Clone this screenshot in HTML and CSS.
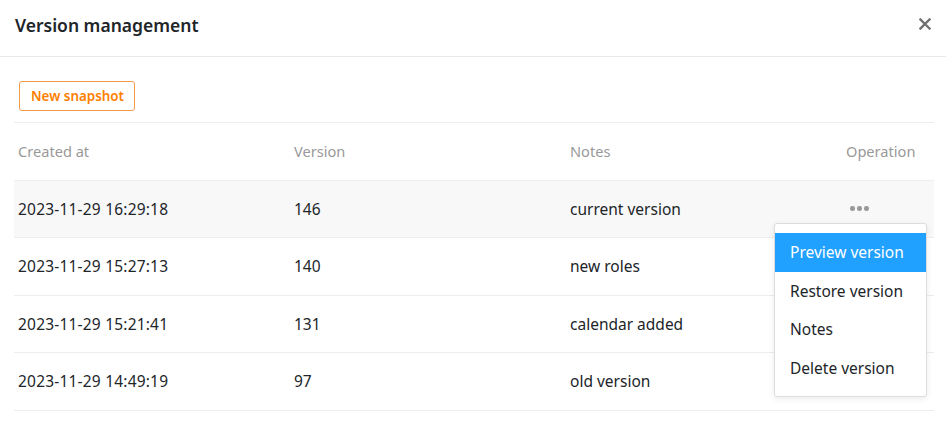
FILE: index.html
```html
<!DOCTYPE html>
<html>
<head>
<meta charset="utf-8">
<link rel="stylesheet" href="styles.css">
</head>
<body>
<div class="dialog">
  <div class="header">
    <div class="title">Version management</div>
    <svg class="close" width="12" height="12" viewBox="0 0 12 12"><path d="M1.5 1.5 L10.5 10.5 M10.5 1.5 L1.5 10.5" stroke="#707070" stroke-width="2.4" stroke-linecap="square"/></svg>
  </div>
  <div class="body">
    <div class="toolbar"><button class="btn">New snapshot</button></div>
    <div class="table">
      <div class="row head">
        <div class="cell">Created at</div>
        <div class="cell">Version</div>
        <div class="cell">Notes</div>
        <div class="cell">Operation</div>
      </div>
      <div class="row hover">
        <div class="cell date">2023-11-29 16:29:18</div>
        <div class="cell">146</div>
        <div class="cell">current version</div>
        <div class="cell"><span class="dots"><i></i><i></i><i></i></span></div>
      </div>
      <div class="row">
        <div class="cell date">2023-11-29 15:27:13</div>
        <div class="cell">140</div>
        <div class="cell">new roles</div>
        <div class="cell"></div>
      </div>
      <div class="row">
        <div class="cell date">2023-11-29 15:21:41</div>
        <div class="cell">131</div>
        <div class="cell">calendar added</div>
        <div class="cell"></div>
      </div>
      <div class="row">
        <div class="cell date">2023-11-29 14:49:19</div>
        <div class="cell">97</div>
        <div class="cell">old version</div>
        <div class="cell"></div>
      </div>
      <div class="menu">
        <div class="item active">Preview version</div>
        <div class="item">Restore version</div>
        <div class="item">Notes</div>
        <div class="item">Delete version</div>
      </div>
    </div>
  </div>
</div>
</body>
</html>
```
FILE: styles.css
```css
* { box-sizing: border-box; }
html, body { margin: 0; padding: 0; background: #fff; }
body { font-family: "Noto Sans", "Open Sans", sans-serif; color: #212529; width: 946px; height: 426px; overflow: hidden; }
.dialog { width: 946px; }
.header { height: 57px; border-bottom: 1px solid #e9e9e9; display: flex; align-items: center; justify-content: space-between; padding: 0 15px 0 15px; }
.title { font-size: 17.5px; font-weight: 600; color: #212529; margin-top: -6px; }
.close { margin-top: -8px; margin-right: 0; }
.body { padding: 24px 12px 0 14px; }
.toolbar { padding: 0 0 11px 5px; border-bottom: 1px solid #eee; }
.btn { font-family: inherit; font-size: 13.4px; font-weight: 600; color: #ff8000; background: #fff; border: 1px solid #f09a4a; border-radius: 3px; height: 30px; padding: 0 10px 0 11px; cursor: pointer; }
.table { position: relative; }
.row { display: grid; grid-template-columns: 276px 276px 276px 1fr; height: 57.5px; align-items: center; border-bottom: 1px solid #eee; font-size: 15.5px; color: #212529; }
.row.head { color: #999; font-size: 14.6px; }
.row.hover { background: #f8f8f8; }
.cell { padding-left: 4px; white-space: nowrap; }
.cell.date { letter-spacing: 0.2px; }
.dots { display: flex; gap: 2.5px; margin-left: 4px; margin-top: -1px; }
.dots i { width: 4.5px; height: 4.5px; border-radius: 50%; background: #999; display: block; }
.menu { position: absolute; left: 760px; top: 100px; width: 153px; background: #fff; border: 1px solid #ddd; border-radius: 3px; box-shadow: 0 2px 6px rgba(0,0,0,0.08); padding: 9px 0 9px 0; }
.item { height: 38.5px; line-height: 38.5px; padding-left: 15px; font-size: 15.5px; color: #212529; }
.item.active { background: #20a0ff; color: #fff; }
```
